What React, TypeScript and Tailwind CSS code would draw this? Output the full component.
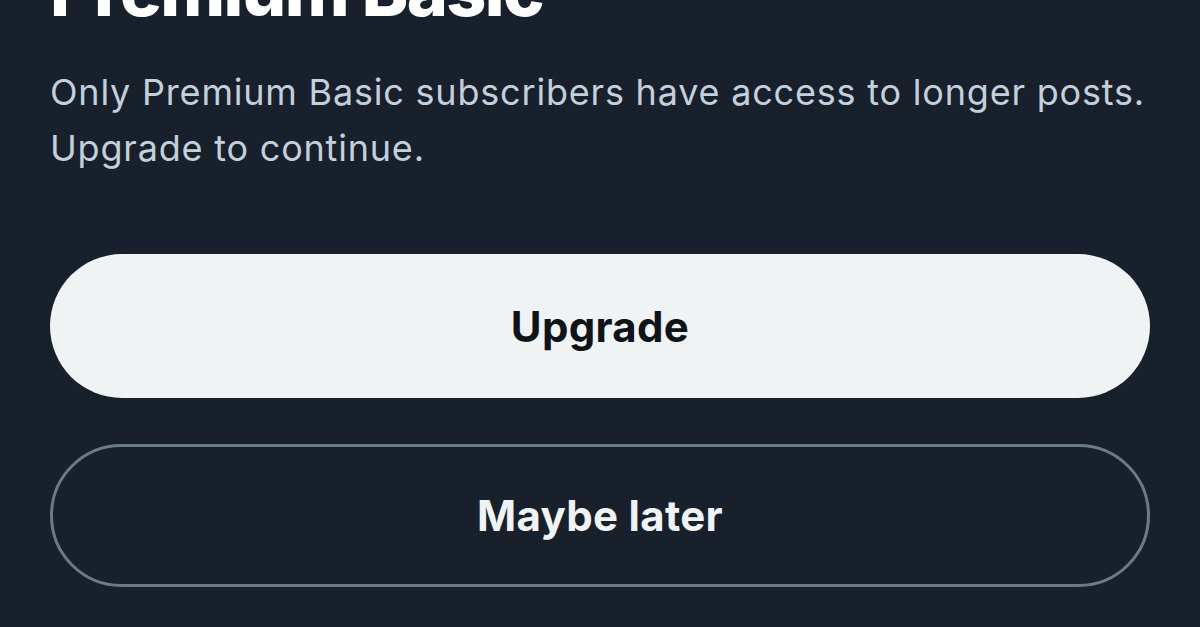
export default function App() {
  return (
    <div className="h-[627px] w-[1200px] overflow-hidden bg-[#17202b] px-[50px] font-['Inter','Noto_Sans',sans-serif]">
      <h1 className="mt-[-44px] text-[70px] font-extrabold leading-none tracking-[-1.6px] text-white">Premium Basic</h1>
      <p className="mt-[38px] text-[36px] leading-[56px] tracking-[0.8px] text-[#c3d0dc]">
        Only Premium Basic subscribers have access to longer posts.
        <br />
        Upgrade to continue.
      </p>
      <div className="mt-[78px] flex flex-col gap-[46px]">
        <button className="flex h-[144px] w-full items-center justify-center rounded-full bg-[#eff3f4] text-[42px] font-bold tracking-[0.3px] text-[#0f1419]">
          Upgrade
        </button>
        <button className="flex h-[143px] w-full items-center justify-center rounded-full border-[3px] border-[#6b7a89] text-[42px] font-bold tracking-[0.3px] text-[#eff3f4]">
          Maybe later
        </button>
      </div>
    </div>
  );
}
